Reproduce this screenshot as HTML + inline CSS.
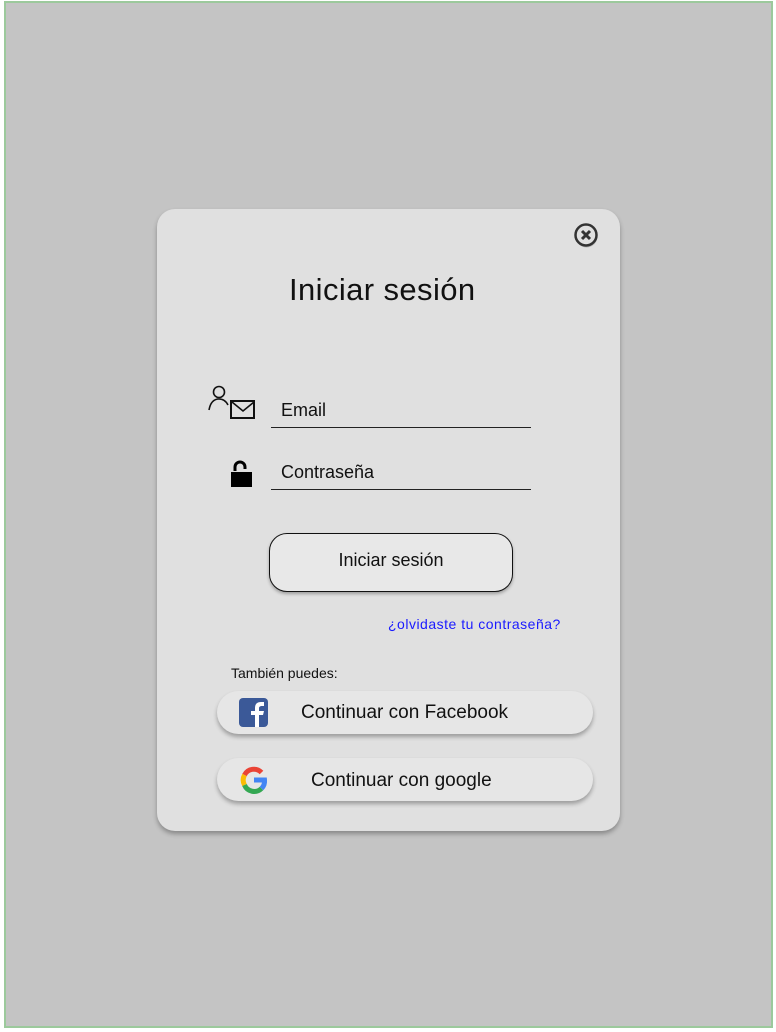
<!DOCTYPE html>
<html><head><meta charset="utf-8"><style>
body{margin:0;width:776px;height:1032px;background:#fff;position:relative;font-family:"Liberation Sans","DejaVu Sans",sans-serif;overflow:hidden}
.frame{position:absolute;left:4px;top:1px;width:765px;height:1023px;border:2px solid #9cc99c;background:#c4c4c4}
.card{position:absolute;left:157px;top:209px;width:463px;height:622px;border-radius:18px;background:#e0e0e0;box-shadow:0 3px 5px rgba(0,0,0,.3)}
.abs{position:absolute}
.t{color:#111}
.line{position:absolute;height:1px;background:#222;width:260px;left:271px}
.btn{position:absolute;background:#e6e6e6;border-radius:22px;box-shadow:0 3px 4px rgba(0,0,0,.3)}
</style></head><body>
<div class="frame"></div>
<div class="card"></div>
<svg class="abs" style="left:573px;top:222px" width="28" height="28" viewBox="0 0 28 28"><circle cx="13" cy="13" r="11" fill="#555" opacity=".3" transform="translate(0.5,1.5)"/><circle cx="13" cy="13" r="10.5" fill="#e0e0e0" stroke="#333" stroke-width="2.5"/><path d="M9 9l8 8M17 9l-8 8" stroke="#333" stroke-width="3"/></svg>
<div class="abs t" style="left:289px;top:272px;font-size:31px;letter-spacing:.4px">Iniciar sesión</div>
<svg class="abs" style="left:207px;top:384px" width="52" height="38" viewBox="0 0 52 38"><circle cx="12" cy="8" r="5.5" fill="none" stroke="#111" stroke-width="1.6"/><path d="M2 26 Q4 15 12 15 Q18 15 21 21" fill="none" stroke="#111" stroke-width="1.6"/><rect x="24" y="17" width="23" height="17" fill="#e0e0e0" stroke="#111" stroke-width="2"/><path d="M25 18l11 9 11-9" fill="none" stroke="#111" stroke-width="1.6"/></svg>
<div class="abs t" style="left:281px;top:400px;font-size:18px">Email</div>
<div class="line" style="top:427px"></div>
<svg class="abs" style="left:230px;top:460px" width="24" height="28" viewBox="0 0 24 28"><path d="M5 11V7a5 5 0 0 1 10 0v2" fill="none" stroke="#000" stroke-width="3"/><rect x="1" y="12" width="21" height="15" fill="#000"/></svg>
<div class="abs t" style="left:281px;top:462px;font-size:18px">Contraseña</div>
<div class="line" style="top:489px"></div>
<div class="abs" style="left:269px;top:533px;width:242px;height:57px;border:1px solid #111;border-radius:18px;background:#e8e8e8;box-shadow:0 2px 3px rgba(0,0,0,.3)"></div>
<div class="abs t" style="left:269px;top:550px;width:244px;text-align:center;font-size:18px">Iniciar sesión</div>
<div class="abs" style="left:388px;top:616px;font-size:14px;letter-spacing:.5px;color:#1a1aff">¿olvidaste tu contraseña?</div>
<div class="abs t" style="left:231px;top:665px;font-size:14px">También puedes:</div>
<div class="btn" style="left:217px;top:691px;width:376px;height:43px"></div>
<svg class="abs" style="left:239px;top:698px" width="30" height="30" viewBox="0 0 30 30"><rect x="0" y="0" width="29" height="29" rx="4" fill="#3b5998"/><path d="M16 29V17h-4v-4h4v-3c0-4 2-6 6-6h3v4h-2c-2 0-3 1-3 2v3h5l-1 4h-4v12z" fill="#fff"/></svg>
<div class="abs t" style="left:301px;top:702px;font-size:19px">Continuar con Facebook</div>
<div class="btn" style="left:217px;top:758px;width:376px;height:43px"></div>
<svg class="abs" style="left:239px;top:765px" width="30" height="30" viewBox="0 0 30 30"><g fill="none" stroke-width="5"><path d="M22.5 7.5A10.5 10.5 0 0 0 5.5 10" stroke="#ea4335"/><path d="M5.5 10a10.5 10.5 0 0 0 0 10" stroke="#fbbc05"/><path d="M5.5 20a10.5 10.5 0 0 0 17 3.5" stroke="#34a853"/><path d="M22.5 23.5A10.5 10.5 0 0 0 25.5 15H15" stroke="#4285f4"/></g></svg>
<div class="abs t" style="left:311px;top:770px;font-size:19px">Continuar con google</div>
</body></html>
